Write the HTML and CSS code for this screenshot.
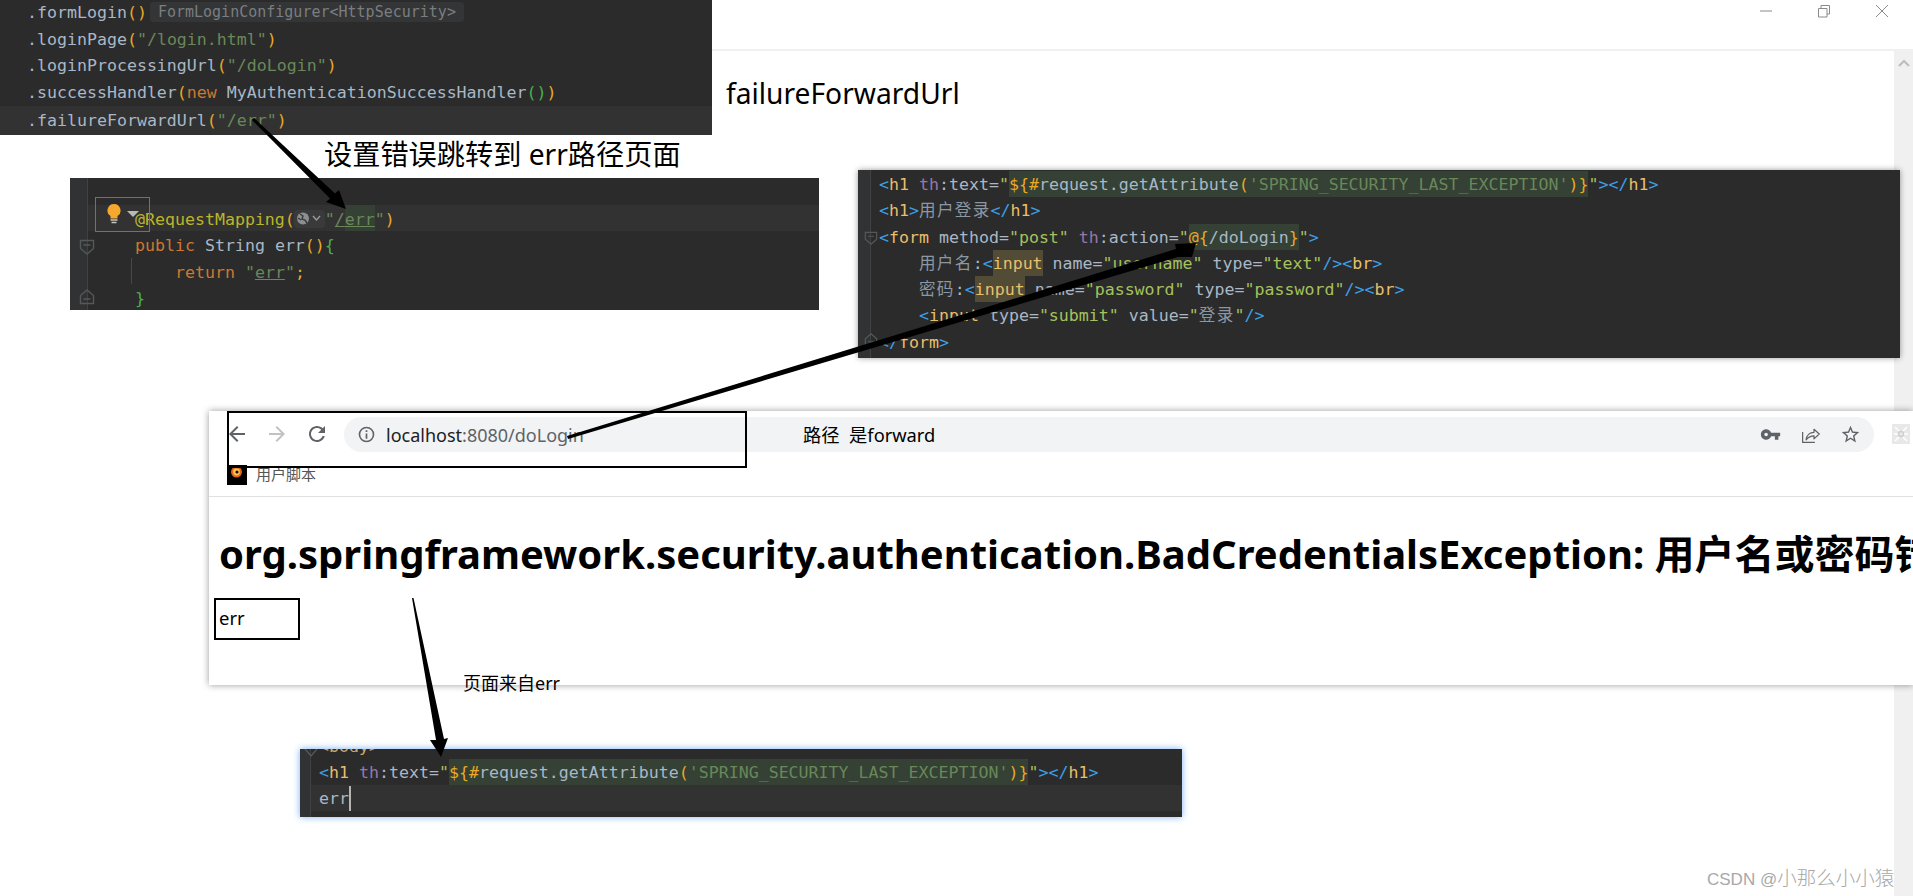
FILE: index.html
```html
<!DOCTYPE html>
<html lang="zh">
<head>
<meta charset="utf-8">
<title>failureForwardUrl</title>
<link rel="stylesheet" href="styles.css">
</head>
<body>
<div class="canvas">
  <header class="titlebar">
    <span class="winbtn"><svg width="14" height="14" viewBox="0 0 14 14"><path d="M1 7h12" class="winline"/></svg></span>
    <span class="winbtn"><svg width="14" height="14" viewBox="0 0 14 14"><path d="M1.5 4.5h8.5v8.5h-8.5zM4 4.5v-3h8.5v8.5h-2.5" class="winline"/></svg></span>
    <span class="winbtn"><svg width="14" height="14" viewBox="0 0 14 14"><path d="M1 1l12 12M13 1l-12 12" class="winline"/></svg></span>
  </header>
  <div class="below">
    <main class="sheet"></main>
    <aside class="scrollbar"><svg width="12" height="8" viewBox="0 0 12 8"><path d="M1 7l5-5 5 5" fill="none" stroke="#bdbdbd" stroke-width="2"/></svg></aside>
  </div>

  <section class="code panel-a">
    <div class="line"><span class="p">.formLogin</span><span class="o">()</span><span class="hint">FormLoginConfigurer&lt;HttpSecurity&gt;</span></div>
    <div class="line"><span class="p">.loginPage</span><span class="o">(</span><span class="s">"/login.html"</span><span class="o">)</span></div>
    <div class="line"><span class="p">.loginProcessingUrl</span><span class="o">(</span><span class="s">"/doLogin"</span><span class="o">)</span></div>
    <div class="line"><span class="p">.successHandler</span><span class="o">(</span><span class="k">new</span> <span class="p">MyAuthenticationSuccessHandler</span><span class="g">()</span><span class="o">)</span></div>
    <div class="line current last"><span class="p">.failureForwardUrl</span><span class="o">(</span><span class="s">"/err"</span><span class="o">)</span></div>
  </section>

  <p class="note note-title">failureForwardUrl</p>
  <p class="note note-set">设置错误跳转到 err路径页面</p>

  <section class="code panel-b">
    <div class="gutter"></div>
    <div class="lines">
      <div class="line current"><span class="y">@RequestMapping</span><span class="o">(</span><span class="inlay"><svg width="26" height="15" viewBox="0 0 26 15"><circle cx="7" cy="7.5" r="6" fill="#8b8f91"/><path d="M4 3l3 2-1 3 3 1 2 3M2 7l3 2" fill="none" stroke="#3a3a3a" stroke-width="1.4"/><path d="M17 5l3.5 4 3.5-4" fill="none" stroke="#9a9a9a" stroke-width="1.4"/></svg></span><span class="s">"<u>/</u><span class="mark"><u>err</u></span>"</span><span class="o">)</span></div>
      <div class="line"><span class="k">public</span> <span class="p">String err</span><span class="o">()</span><span class="g">{</span></div>
      <div class="line"><span class="k">    return</span> <span class="s">"<u>err</u>"</span><span class="o">;</span></div>
      <div class="line"><span class="g">}</span></div>
    </div>
    <svg class="fold fold-b1" width="16" height="16" viewBox="0 0 16 16"><path d="M1.500 1.500h13v8l-6.500 5.500-6.500-5.500zM4.500 6h7" class="foldline"/></svg>
    <svg class="fold fold-b2" width="16" height="16" viewBox="0 0 16 16"><path d="M1.500 14.500h13v-8l-6.500-5.500-6.500 5.500zM4.500 10h7" class="foldline"/></svg>
    <span class="guide"></span>
    <div class="bulbbox">
      <svg width="14" height="20" viewBox="0 0 14 20"><path d="M7 0a6.500 6.500 0 0 0-3.500 12v2.500h7v-2.500a6.500 6.500 0 0 0-3.500-12z" fill="#f4a92e"/><path d="M3.500 16h7M4.500 18.500h5" stroke="#c5c5c5" stroke-width="1.600"/></svg>
      <svg width="12" height="6" viewBox="0 0 12 6"><path d="M0 0h12l-6 6z" fill="#b9b9b9"/></svg>
    </div>
  </section>

  <section class="code panel-c">
    <div class="gutter"></div>
    <div class="lines">
      <div class="line"><span class="t">&lt;</span><span class="n">h1</span> <span class="a">th</span><span class="p">:text=</span><span class="s2">"</span><span class="mark"><span class="o">${#</span><span class="p">request.getAttribute</span><span class="o">(</span><span class="s">'SPRING_SECURITY_LAST_EXCEPTION'</span><span class="o">)}</span></span><span class="s2">"</span><span class="t">&gt;&lt;/</span><span class="n">h1</span><span class="t">&gt;</span></div>
      <div class="line"><span class="t">&lt;</span><span class="n">h1</span><span class="t">&gt;</span><span class="cjk">用户登录</span><span class="t">&lt;/</span><span class="n">h1</span><span class="t">&gt;</span></div>
      <div class="line"><span class="t">&lt;</span><span class="n">form</span> <span class="p">method=</span><span class="s2">"post"</span> <span class="a">th</span><span class="p">:action=</span><span class="s2">"</span><span class="mark"><span class="o">@{</span><span class="p">/doLogin</span><span class="o">}</span></span><span class="s2">"</span><span class="t">&gt;</span></div>
      <div class="line">    <span class="cjk">用户名</span><span class="p">:</span><span class="t">&lt;</span><span class="warm n">input</span> <span class="p">name=</span><span class="s2">"username"</span> <span class="p">type=</span><span class="s2">"text"</span><span class="t">/&gt;&lt;</span><span class="n">br</span><span class="t">&gt;</span></div>
      <div class="line">    <span class="cjk">密码</span><span class="p">:</span><span class="t">&lt;</span><span class="warm n">input</span> <span class="p">name=</span><span class="s2">"password"</span> <span class="p">type=</span><span class="s2">"password"</span><span class="t">/&gt;&lt;</span><span class="n">br</span><span class="t">&gt;</span></div>
      <div class="line">    <span class="t">&lt;</span><span class="n">input</span> <span class="p">type=</span><span class="s2">"submit"</span> <span class="p">value=</span><span class="s2">"<span class="cjk">登录</span>"</span><span class="t">/&gt;</span></div>
      <div class="line"><span class="t">&lt;/</span><span class="n">form</span><span class="t">&gt;</span></div>
    </div>
    <svg class="fold fold-c1" width="14" height="16" viewBox="0 0 16 16"><path d="M1.500 1.500h13v8l-6.500 5.500-6.500-5.500zM4.500 6h7" class="foldline"/></svg>
    <svg class="fold fold-c2" width="14" height="16" viewBox="0 0 16 16"><path d="M1.500 14.500h13v-8l-6.500-5.500-6.500 5.500zM4.500 10h7" class="foldline"/></svg>
  </section>

  <section class="browser">
    <div class="toolbar">
      <svg class="navicon" viewBox="0 0 24 24"><path class="ico" d="M20 11H7.830l5.590-5.590L12 4l-8 8 8 8 1.410-1.410L7.830 13H20v-2z"/></svg>
      <svg class="navicon" viewBox="0 0 24 24"><path class="ico-off" d="M12 4l-1.410 1.410L16.170 11H4v2h12.170l-5.580 5.590L12 20l8-8z"/></svg>
      <svg class="navicon" viewBox="0 0 24 24"><path class="ico" d="M17.650 6.350C16.200 4.900 14.210 4 12 4c-4.420 0-7.990 3.580-7.990 8s3.570 8 7.990 8c3.730 0 6.840-2.550 7.730-6h-2.080c-.82 2.330-3.040 4-5.650 4-3.310 0-6-2.690-6-6s2.690-6 6-6c1.660 0 3.140.69 4.220 1.780L13 11h7V4l-2.350 2.350z"/></svg>
      <div class="omnibox">
        <svg class="infoicon" viewBox="0 0 16 16"><circle cx="8" cy="8" r="6.600" fill="none" stroke="#5f6368" stroke-width="1.500"/><path d="M7.200 7h1.600v5H7.200zM7.200 4h1.600v1.700H7.200z" fill="#5f6368"/></svg>
        <span class="url">localhost<span class="urlrest">:8080/doLogin</span></span>
        <span class="omni-end">
          <svg class="omniicon" viewBox="0 0 24 24"><path class="ico" d="M12.650 10C11.830 7.670 9.610 6 7 6c-3.310 0-6 2.690-6 6s2.690 6 6 6c2.610 0 4.830-1.670 5.650-4H17v4h4v-4h2v-4H12.650zM7 14c-1.100 0-2-.9-2-2s.9-2 2-2 2 .9 2 2-.9 2-2 2z"/></svg>
          <svg class="omniicon" viewBox="0 0 24 24"><path d="M3 9v12h14M7 18c.5-5 4-8.500 9-8.500V6l6 5.500-6 5.500v-3.500c-3.500 0-6.500 1.500-9 4.500z" fill="none" stroke="#5f6368" stroke-width="1.400" stroke-linejoin="round"/></svg>
          <svg class="omniicon" viewBox="0 0 24 24"><path class="ico" d="M22 9.240l-7.190-.62L12 2 9.190 8.630 2 9.240l5.460 4.730L5.820 21 12 17.270 18.180 21l-1.630-7.030L22 9.240zM12 15.400l-3.760 2.270 1-4.280-3.320-2.880 4.380-.38L12 6.100l1.710 4.040 4.380.38-3.320 2.880 1 4.280L12 15.400z"/></svg>
        </span>
      </div>
      <svg class="exticon" viewBox="0 0 18 20"><rect width="18" height="20" fill="#e8e8e8"/><path d="M3 3l4 4M15 3l-4 4M3 17l4-4M15 17l-4-4M2 10h4M12 10h4" stroke="#fff" stroke-width="1.500"/><circle cx="9" cy="10" r="2.500" fill="none" stroke="#cfcfcf" stroke-width="1.500"/></svg>
    </div>
    <div class="bookmarks">
      <svg class="favicon" viewBox="0 0 20 20"><rect width="20" height="20" fill="#000"/><circle cx="9.500" cy="7" r="5.500" fill="#e4651a"/><circle cx="9.500" cy="7" r="3.400" fill="#ffc552"/><circle cx="10" cy="7" r="1.600" fill="#1b0b02"/></svg>
      <span class="bookmark">用户脚本</span>
    </div>
    <div class="pagebody">
      <h1 class="errtitle">org.springframework.security.authentication.BadCredentialsException: 用户名或密码错误</h1>
      <p class="errtext">err</p>
    </div>
  </section>

  <div class="frame frame-url"></div>
  <div class="frame frame-err"></div>
  <p class="note note-path">路径&nbsp; 是forward</p>
  <p class="note note-from">页面来自err</p>

  <section class="code panel-d">
    <div class="gutter"></div>
    <div class="lines">
      <div class="line dimline"><span class="n">&lt;body&gt;</span></div>
      <div class="line"><span class="t">&lt;</span><span class="n">h1</span> <span class="a">th</span><span class="p">:text=</span><span class="s2">"</span><span class="mark"><span class="o">${#</span><span class="p">request.getAttribute</span><span class="o">(</span><span class="s">'SPRING_SECURITY_LAST_EXCEPTION'</span><span class="o">)}</span></span><span class="s2">"</span><span class="t">&gt;&lt;/</span><span class="n">h1</span><span class="t">&gt;</span></div>
      <div class="line current"><span class="p caret">err</span></div>
    </div>
    <svg class="fold fold-d" width="14" height="9" viewBox="0 0 14 9"><path d="M1 0l6 7 6-7" class="foldline"/></svg>
  </section>

  <svg class="arrows" width="1913" height="896" viewBox="0 0 1913 896">
    <polygon points="252,120 254,118 335,193.500 339,190 346,209 326,202 330,198.500"/>
    <polygon points="567,436 568,439 1178,257 1192,257 1196,243 1175,244 1176,249"/>
    <polygon points="412,598 413.500,598 444,739 448,738 441,757 430,740 436,740"/>
  </svg>

  <p class="watermark">CSDN @<span class="wmcjk">小那么小小猿</span></p>
</div>
</body>
</html>
```
FILE: styles.css
```css
* { box-sizing: border-box; }
html, body { margin: 0; padding: 0; background: #fff; }
body { overflow: hidden; font-family: "Noto Sans", "Noto Sans CJK SC", sans-serif; }

.canvas { position: relative; width: 1913px; height: 896px; overflow: hidden; display: flex; flex-direction: column; }

.titlebar { height: 51px; flex: none; display: flex; justify-content: flex-end; align-items: flex-start; gap: 44px; padding: 4px 24px 0 0; border-bottom: 2px solid #f0f0f0; }
.winbtn { display: block; width: 14px; height: 14px; }
.winbtn svg { display: block; }
.winline { fill: none; stroke: #8a8a8a; stroke-width: 1; }

.below { flex: 1; display: flex; min-height: 0; }
.sheet { flex: 1; background: #fff; }
.scrollbar { width: 19px; background: #f0f0f0; display: flex; justify-content: center; align-items: flex-start; padding-top: 8px; }

.code { position: absolute; background: #2b2b2b; color: #a9b7c6; font-family: "DejaVu Sans Mono", "Noto Sans CJK SC", monospace; font-size: 16.6px; overflow: hidden; }
.line { white-space: pre; height: 26.3px; line-height: 28px; }
.current { background: #323232; }
.lines { flex: 1; min-width: 0; }
.gutter { flex: none; border-right: 1px solid #3f4143; background: #303234; }

.p { color: #a9b7c6; }
.s { color: #6a8759; }
.s2 { color: #a5c25c; }
.o { color: #e9a825; }
.g { color: #4caf50; }
.k { color: #cc7832; }
.y { color: #bbb529; }
.t { color: #3d9ee6; }
.n { color: #e8bf6a; }
.a { color: #9876aa; }
.cjk { display: inline-block; letter-spacing: 1.300px; color: #8a97a5; }
.mark { display: inline-block; background: #344134; height: 26.300px; }
.warm { display: inline-block; background: #524c37; height: 26.300px; }

.panel-a { left: 0; top: 0; width: 712px; height: 135px; }
.panel-a .line { height: 26.500px; line-height: 26.500px; padding-left: 27px; }
.panel-a .last { height: 29px; line-height: 29px; }
.hint { display: inline-block; margin-left: 3px; padding: 0 8px; font-size: 15px; background: #343536; color: #7a7e80; height: 20px; line-height: 20px; border-radius: 3px; vertical-align: 1px; }

.panel-b { left: 70px; top: 178px; width: 749px; height: 132px; display: flex; padding-top: 27px; }
.panel-b .gutter { width: 18px; margin-top: -27px; }
.panel-b .line { padding-left: 47px; height: 26.400px; line-height: 30px; }
.panel-b .mark { height: 26.400px; }
.inlay { display: inline-block; width: 31px; height: 18px; margin-left: -1px; background: #3a3a3a; border-radius: 4px; vertical-align: -3px; padding: 1px 0 0 2px; }
.inlay svg { display: block; }
.bulbbox { position: absolute; left: 25px; top: 19px; width: 55px; height: 35px; border: 1.500px solid #6f7274; display: flex; align-items: flex-start; gap: 6px; padding: 6px 0 0 11px; }
.bulbbox svg:last-child { margin-top: 7px; }
.fold { position: absolute; }
.foldline { fill: none; stroke: #55585a; stroke-width: 1.400; }
.fold-b1 { left: 9px; top: 61px; }
.fold-b2 { left: 9px; top: 111px; }
.guide { position: absolute; left: 61px; top: 80px; width: 1px; height: 26px; background: #3f4f3f; }

.panel-c { left: 858px; top: 170px; width: 1041.500px; height: 188px; display: flex; padding-top: 1px; box-shadow: 0 0 6px rgba(0,0,0,.4); }
.panel-c .gutter { width: 13px; margin-top: -1px; margin-right: 8px; }
.fold-c1 { left: 6px; top: 60px; }
.fold-c2 { left: 6px; top: 162px; }

.panel-d { left: 300px; top: 749px; width: 882px; height: 68px; display: flex; box-shadow: 0 0 7px #79b0f5; }
.panel-d .gutter { width: 11px; }
.panel-d .lines { margin-top: -16px; }
.panel-d .line { padding-left: 8px; height: 26px; line-height: 28px; }
.panel-d .mark { height: 26px; }
.fold-d { left: 4px; top: 0; }
.dimline { opacity: .85; }
.caret { border-right: 2px solid #b5b5b5; display: inline-block; height: 25px; line-height: 26px; margin-right: -2px; }

.note { position: absolute; margin: 0; white-space: nowrap; color: #000; }
.note-title { left: 726px; top: 75px; font-size: 28.200px; line-height: 36px; }
.note-set { left: 324px; top: 134px; font-size: 28.200px; line-height: 40px; }
.note-path { left: 803px; top: 423px; font-size: 18.300px; line-height: 24px; }
.note-from { left: 463px; top: 671px; font-size: 18px; line-height: 24px; }

.browser { position: absolute; left: 209px; top: 411px; width: 1704px; height: 274px; background: #fff; box-shadow: 0 0 7px rgba(0,0,0,.4); overflow: hidden; display: flex; flex-direction: column; }
.toolbar { flex: none; height: 48px; display: flex; align-items: flex-start; padding: 6px 0 0 16px; }
.navicon { flex: none; width: 24px; height: 24px; margin: 5px 16px 0 0; }
.ico { fill: #5f6368; }
.ico-off { fill: #c0c2c4; }
.omnibox { flex: none; width: 1530px; margin-left: -1px; height: 35px; border-radius: 18px; background: #f1f3f4; display: flex; align-items: center; padding: 0 13px 0 14px; }
.infoicon { flex: none; width: 17px; height: 17px; margin-right: 11px; }
.url { font-size: 18px; color: #202124; white-space: nowrap; }
.urlrest { color: #5f6368; }
.omni-end { margin-left: auto; display: flex; gap: 19px; }
.omniicon { width: 21px; height: 21px; display: block; }
.exticon { flex: none; width: 18px; height: 20px; margin: 7px 0 0 18px; }

.bookmarks { flex: none; height: 38px; display: flex; align-items: flex-start; padding: 6px 0 0 18px; border-bottom: 1.500px solid #e0e0e0; }
.favicon { flex: none; width: 20px; height: 20px; }
.bookmark { margin-left: 9px; font-size: 15px; line-height: 18px; color: #555; }

.pagebody { flex: 1; padding: 0 0 0 10px; }
.errtitle { margin: 28px 0 0; font-size: 40px; line-height: 58px; font-weight: 700; white-space: nowrap; color: #000; }
.errtext { margin: 23px 0 0; font-size: 18.500px; line-height: 24px; color: #000; }

.frame { position: absolute; border: 2px solid #000; }
.frame-url { left: 227px; top: 411px; width: 520px; height: 57px; }
.frame-err { left: 214px; top: 598px; width: 86px; height: 42px; }

.arrows { position: absolute; left: 0; top: 0; pointer-events: none; }
.arrows polygon { fill: #000; }

.watermark { position: absolute; left: 1707px; top: 866px; margin: 0; font-family: "Liberation Sans", "Noto Sans CJK SC", sans-serif; font-size: 17px; line-height: 24px; color: #a8a8a8; white-space: nowrap; }
.wmcjk { font-size: 19.500px; font-weight: 300; }
```
